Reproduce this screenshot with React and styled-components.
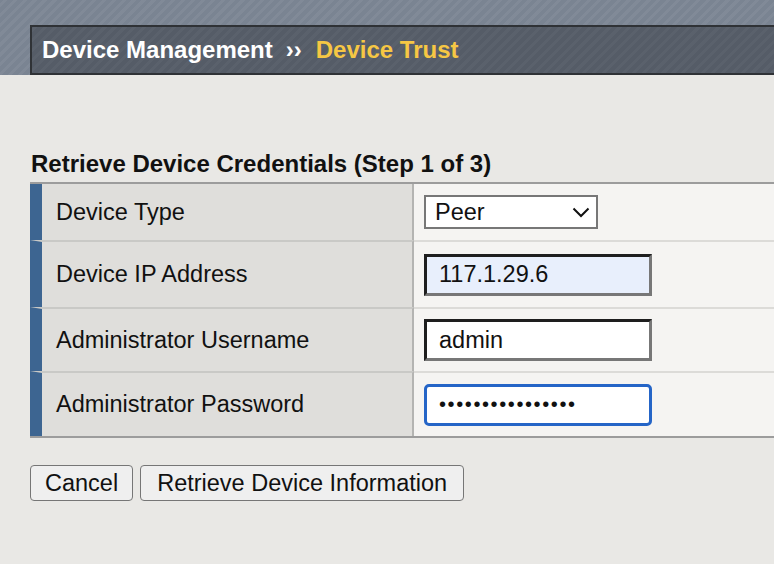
import React from "react";
import styled, { createGlobalStyle } from "styled-components";

const Global = createGlobalStyle`
  html, body { margin: 0; padding: 0; }
  body {
    background: #e9e8e5;
    font-family: "Liberation Sans", Arial, sans-serif;
    color: #111;
    width: 774px;
    height: 564px;
    overflow: hidden;
  }
`;

const Page = styled.div`
  display: flex;
  flex-direction: column;
  width: 774px;
`;

const Banner = styled.div`
  padding: 25px 0 0 30px;
  background-color: #7a8492;
  background-image: repeating-linear-gradient(
    -45deg,
    rgba(255, 255, 255, 0.05) 0px,
    rgba(255, 255, 255, 0.05) 3px,
    rgba(0, 0, 0, 0) 3px,
    rgba(0, 0, 0, 0) 7px
  );
`;

const Crumbs = styled.div`
  display: flex;
  align-items: center;
  height: 46px;
  border: 2px solid #2f3236;
  border-right: none;
  padding-left: 10px;
  background-color: #555c67;
  background-image: repeating-linear-gradient(
    -45deg,
    rgba(255, 255, 255, 0.03) 0px,
    rgba(255, 255, 255, 0.03) 3px,
    rgba(0, 0, 0, 0) 3px,
    rgba(0, 0, 0, 0) 7px
  );
  font-size: 24px;
  font-weight: bold;
  white-space: nowrap;
`;

const Crumb = styled.span`
  color: ${(p) => (p.$current ? "#f6c744" : "#ffffff")};
`;

const Sep = styled.span`
  color: #ffffff;
  margin: 0 14px 0 13px;
`;

const Content = styled.div`
  display: flex;
  flex-direction: column;
  padding: 75px 0 0 30px;
`;

const Title = styled.h2`
  margin: 0 0 4px 1px;
  font-size: 24px;
  line-height: 28px;
  font-weight: bold;
  color: #111;
  white-space: nowrap;
`;

const Table = styled.div`
  display: grid;
  grid-template-columns: 384px 1fr;
  border-top: 2px solid #9c9c9c;
  border-bottom: 2px solid #9c9c9c;
`;

const Label = styled.div`
  display: flex;
  align-items: center;
  height: ${(p) => p.$h}px;
  background: #dfdedb;
  border-left: 12px solid #3d6591;
  border-right: 2px solid #b4b4b2;
  border-top: ${(p) => (p.$first ? "none" : "2px solid #c9c9c6")};
  padding-left: 14px;
  font-size: 23.5px;
  white-space: nowrap;
`;

const Value = styled.div`
  display: flex;
  align-items: center;
  height: ${(p) => p.$h}px;
  background: #f5f4f2;
  border-top: ${(p) => (p.$first ? "none" : "2px solid #dcdbd8")};
  padding-left: 10px;
`;

const SelectWrap = styled.div`
  position: relative;
  display: flex;
  width: 174px;
  height: 34px;
`;

const Select = styled.select`
  appearance: none;
  -webkit-appearance: none;
  width: 100%;
  height: 100%;
  box-sizing: border-box;
  border: 2px solid #777;
  border-radius: 0;
  background: #fff;
  padding: 0 0 0 9px;
  margin: 0;
  font-family: "Liberation Sans", Arial, sans-serif;
  font-size: 23.5px;
  color: #111;
  outline: none;
`;

const Chevron = styled.svg`
  position: absolute;
  right: 8px;
  top: 12px;
  pointer-events: none;
`;

const Field = styled.input`
  box-sizing: border-box;
  width: 228px;
  height: 42px;
  margin: 0;
  padding: 0 0 0 12px;
  font-family: "Liberation Sans", Arial, sans-serif;
  font-size: 23.5px;
  color: #111;
  outline: none;
  background: ${(p) => (p.$filled ? "#e8effc" : "#ffffff")};
  border-style: solid;
  border-width: 3px;
  border-color: #1e1e1e #777 #777 #1e1e1e;
  border-radius: 0;
`;

const FocusField = styled(Field)`
  border: 3px solid #2565c7;
  border-radius: 5px;
  background: #fff;
  font-size: 20px;
  letter-spacing: 1.6px;
`;

const Actions = styled.div`
  display: flex;
  gap: 7px;
  margin-top: 27px;
`;

const Button = styled.button`
  height: 36px;
  margin: 0;
  padding: 0 ${(p) => (p.$wide ? 16 : 14)}px;
  border: 1px solid #767676;
  border-radius: 4px;
  background: #efefef;
  font-family: "Liberation Sans", Arial, sans-serif;
  font-size: 23.5px;
  color: #111;
  white-space: nowrap;
`;

export default function App() {
  return (
    <Page>
      <Global />
      <Banner>
        <Crumbs>
          <Crumb>Device Management</Crumb>
          <Sep>››</Sep>
          <Crumb $current>Device Trust</Crumb>
        </Crumbs>
      </Banner>
      <Content>
        <Title>Retrieve Device Credentials (Step 1 of 3)</Title>
        <Table>
          <Label $first $h={56}>Device Type</Label>
          <Value $first $h={56}>
            <SelectWrap>
              <Select defaultValue="Peer">
                <option>Peer</option>
                <option>Subordinate</option>
              </Select>
              <Chevron width="18" height="11" viewBox="0 0 18 11">
                <polyline
                  points="1.5,1.5 9,9 16.5,1.5"
                  fill="none"
                  stroke="#111"
                  strokeWidth="2"
                />
              </Chevron>
            </SelectWrap>
          </Value>
          <Label $h={65}>Device IP Address</Label>
          <Value $h={65}>
            <Field $filled type="text" defaultValue="117.1.29.6" />
          </Value>
          <Label $h={62}>Administrator Username</Label>
          <Value $h={62}>
            <Field type="text" defaultValue="admin" />
          </Value>
          <Label $h={63}>Administrator Password</Label>
          <Value $h={63}>
            <FocusField type="password" defaultValue="adminpassword123" />
          </Value>
        </Table>
        <Actions>
          <Button>Cancel</Button>
          <Button $wide>Retrieve Device Information</Button>
        </Actions>
      </Content>
    </Page>
  );
}
